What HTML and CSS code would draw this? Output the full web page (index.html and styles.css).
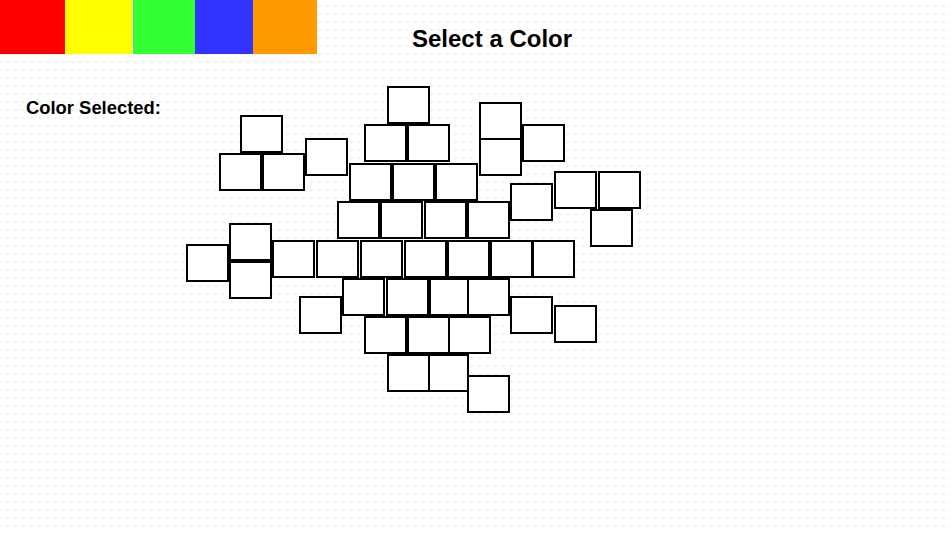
FILE: index.html
```html
<!DOCTYPE html>
<html lang="en">
<head>
<meta charset="UTF-8">
<meta name="viewport" content="width=device-width, initial-scale=1.0">
<title>Select a Color</title>
<link rel="stylesheet" href="styles.css">
</head>
<body>
<div class="header">
    <div class="palette">
        <div class="swatch red"></div>
        <div class="swatch yellow"></div>
        <div class="swatch green"></div>
        <div class="swatch blue"></div>
        <div class="swatch orange"></div>
    </div>
    <h1 class="title">Select a Color</h1>
</div>
<div class="main">
    <div class="sidebar">
        <h3 class="selected">Color Selected:</h3>
    </div>
    <div class="board" id="board"></div>
</div>

<script>
    // cell positions on the board (left, top)
    var cells = [
        [201, 32], [293, 48], [54, 61], [178, 70], [221, 70], [293, 84],
        [336, 70], [119, 84], [33, 99], [76, 99], [163, 109], [206, 109],
        [249, 109], [368, 117], [412, 117], [324, 129], [151, 147], [194, 147],
        [238, 147], [281, 147], [404, 155], [43, 169], [43, 207], [0, 190],
        [86, 186], [130, 186], [174, 186], [218, 186], [261, 186], [304, 186],
        [346, 186], [156, 224], [200, 224], [243, 224], [281, 224], [113, 242],
        [324, 242], [368, 251], [178, 262], [221, 262], [262, 262], [240, 300],
        [201, 300], [281, 321]
    ];

    var board = document.getElementById("board");
    for (var i = 0; i < cells.length; i++) {
        var cell = document.createElement("div");
        cell.className = "cell";
        cell.style.left = cells[i][0] + "px";
        cell.style.top = cells[i][1] + "px";
        board.appendChild(cell);
    }
</script>
</body>
</html>
```

FILE: styles.css
```css
body {
    font-family: "Liberation Sans", Arial, sans-serif;
    margin: 0;
    padding: 0;
    height: 533px;
    background-color: #fff;
    background-image: radial-gradient(#e6e6e6 0.6px, transparent 1px);
    background-size: 8px 8px;
    background-position: 3.5px 2px;
}
.header {
    display: flex;
    height: 54px;
}
.palette {
    display: flex;
    height: 54px;
}
.swatch {
    height: 54px;
}
.red {
    width: 65px;
    background-color: #ff0000;
}
.yellow {
    width: 67px;
    margin-right: 1px;
    background-color: #ffff00;
}
.green {
    width: 62px;
    background-color: #33ff33;
}
.blue {
    width: 58px;
    background-color: #3333ff;
}
.orange {
    width: 64px;
    background-color: #ff9900;
}
.title {
    margin: 0 0 0 95px;
    padding-top: 25px;
    font-size: 24px;
    line-height: 28px;
    font-weight: bold;
    color: #000;
}
.main {
    display: flex;
}
.sidebar {
    width: 186px;
    flex-shrink: 0;
}
.selected {
    margin: 0;
    padding: 44px 0 0 26px;
    font-size: 18.4px;
    line-height: 20px;
    font-weight: bold;
}
.board {
    position: relative;
    flex: 1;
    height: 380px;
}
.cell {
    position: absolute;
    width: 43px;
    height: 38px;
    box-sizing: border-box;
    border: 2px solid #000;
    background-color: #fff;
}
```
